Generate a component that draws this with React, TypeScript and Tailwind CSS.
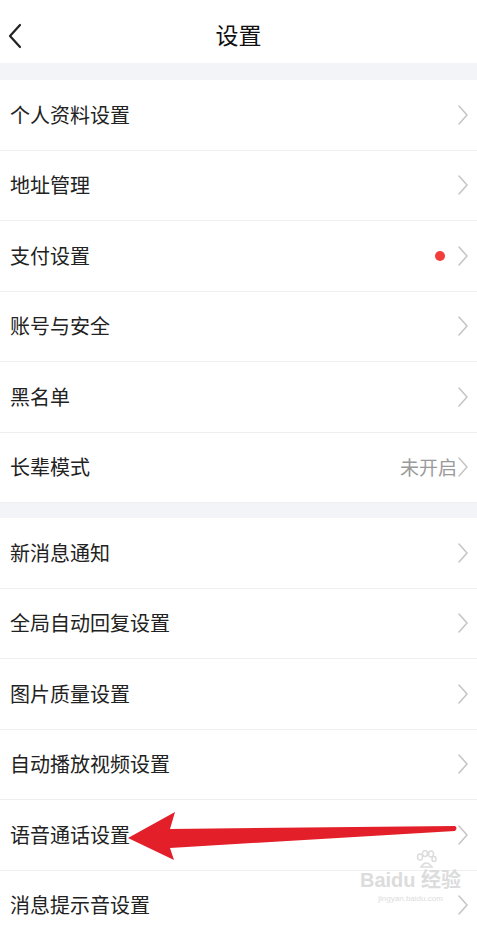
import React from 'react';

interface Row {
  label: string;
  dot?: boolean;
  value?: string;
}

const groupOne: Row[] = [
  { label: '个人资料设置' },
  { label: '地址管理' },
  { label: '支付设置', dot: true },
  { label: '账号与安全' },
  { label: '黑名单' },
  { label: '长辈模式', value: '未开启' },
];

const groupTwo: Row[] = [
  { label: '新消息通知' },
  { label: '全局自动回复设置' },
  { label: '图片质量设置' },
  { label: '自动播放视频设置' },
  { label: '语音通话设置' },
  { label: '消息提示音设置' },
];

const Chevron = () => (
  <svg width="12" height="22" viewBox="0 0 12 22" fill="none" className="shrink-0">
    <path d="M2 2 L10 11 L2 20" stroke="#c6c6c6" strokeWidth="1.6" strokeLinecap="round" strokeLinejoin="round" />
  </svg>
);

const SettingRow: React.FC<{ row: Row }> = ({ row }) => (
  <div className="h-[70.5px] flex items-center justify-between pl-[10px] pr-[8px] border-b border-[#efefef] bg-white">
    <span className="text-[20px] text-[#222]">{row.label}</span>
    <div className="flex items-center">
      {row.dot && <span className="w-[10px] h-[10px] rounded-full bg-[#f23d3d] mr-[12px]" />}
      {row.value && <span className="text-[19px] text-[#9a9a9a]">{row.value}</span>}
      <Chevron />
    </div>
  </div>
);

export default function App() {
  return (
    <div
      className="relative w-[477px] h-[925px] overflow-hidden bg-white"
      style={{ fontFamily: '"Noto Sans CJK SC", "Noto Sans", sans-serif' }}
    >
      <div className="h-[63px] relative flex items-center justify-center pt-[6px] bg-white">
        <svg width="16" height="26" viewBox="0 0 16 26" fill="none" className="absolute left-[7px] top-[23px]">
          <path d="M13 2 L3 13 L13 24" stroke="#222" strokeWidth="2.2" strokeLinecap="round" strokeLinejoin="round" />
        </svg>
        <span className="text-[23px] text-[#111]">设置</span>
      </div>
      <div className="h-[17px] bg-[#f3f4f7]" />
      {groupOne.map((r) => (
        <SettingRow key={r.label} row={r} />
      ))}
      <div className="h-[15px] bg-[#f3f4f7]" />
      {groupTwo.map((r) => (
        <SettingRow key={r.label} row={r} />
      ))}

      {/* annotation arrow */}
      <svg className="absolute left-0 top-0 pointer-events-none" width="477" height="925" viewBox="0 0 477 925">
        <path
          d="M128 838 L175 812 L170 829 L455 826 Q458 828 455 831 L170 848 L174 860 Z"
          fill="#e3202a"
        />
      </svg>

      {/* watermark */}
      <div className="absolute left-[360px] top-[850px] flex flex-col items-center pointer-events-none text-[#dcdcdc] whitespace-nowrap">
        <svg width="22" height="20" viewBox="0 0 22 20" className="ml-[30px]">
          <g fill="none" stroke="#dcdcdc" strokeWidth="1.5">
            <ellipse cx="5" cy="7" rx="2.5" ry="3" />
            <ellipse cx="10" cy="3.5" rx="2.5" ry="3" />
            <ellipse cx="16" cy="4" rx="2.5" ry="3" />
            <ellipse cx="19" cy="9" rx="2" ry="2.5" />
            <path d="M6 17 Q11 9 17 17 Z" />
          </g>
        </svg>
        <span className="text-[20px] font-bold leading-none" style={{ fontFamily: '"Liberation Sans", "Noto Sans CJK SC", sans-serif' }}>
          Baidu 经验
        </span>
        <span className="text-[8px] leading-none mt-[5px]" style={{ fontFamily: '"Liberation Sans", sans-serif' }}>
          jingyan.baidu.com
        </span>
      </div>
    </div>
  );
}
